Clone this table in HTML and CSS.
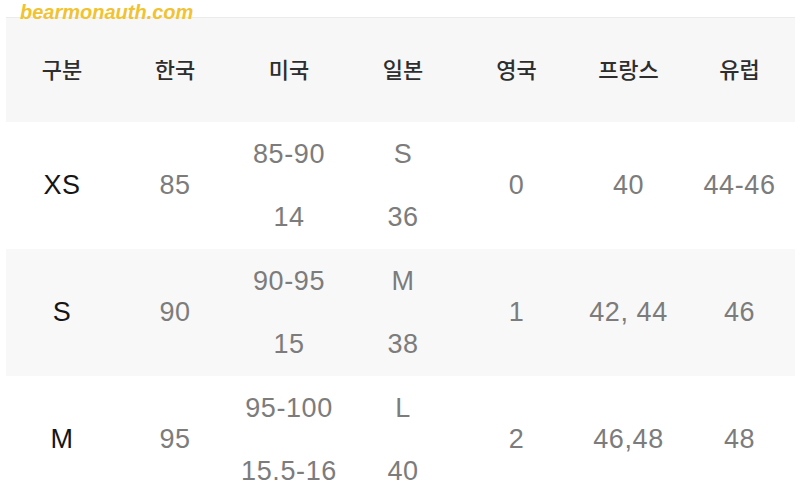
FILE: index.html
```html
<!DOCTYPE html>
<html lang="ko">
<head>
<meta charset="utf-8">
<link rel="stylesheet" href="styles.css">
</head>
<body>
<div class="watermark">bearmonauth.com</div>
<div class="table">
  <div class="row head">
    <div class="cell">구분</div>
    <div class="cell">한국</div>
    <div class="cell">미국</div>
    <div class="cell">일본</div>
    <div class="cell">영국</div>
    <div class="cell">프랑스</div>
    <div class="cell">유럽</div>
  </div>
  <div class="row body">
    <div class="cell size">XS</div>
    <div class="cell">85</div>
    <div class="cell multi"><span>85-90</span><span>14</span></div>
    <div class="cell multi"><span>S</span><span>36</span></div>
    <div class="cell">0</div>
    <div class="cell">40</div>
    <div class="cell">44-46</div>
  </div>
  <div class="row body alt">
    <div class="cell size">S</div>
    <div class="cell">90</div>
    <div class="cell multi"><span>90-95</span><span>15</span></div>
    <div class="cell multi"><span>M</span><span>38</span></div>
    <div class="cell">1</div>
    <div class="cell">42, 44</div>
    <div class="cell">46</div>
  </div>
  <div class="row body">
    <div class="cell size">M</div>
    <div class="cell">95</div>
    <div class="cell multi"><span>95-100</span><span>15.5-16</span></div>
    <div class="cell multi"><span>L</span><span>40</span></div>
    <div class="cell">2</div>
    <div class="cell">46,48</div>
    <div class="cell">48</div>
  </div>
</div>
</body>
</html>
```
FILE: styles.css
```css
html, body {
  margin: 0;
  padding: 0;
  background: #ffffff;
  width: 800px;
  height: 490px;
  overflow: hidden;
}
body {
  position: relative;
  font-family: "Liberation Sans", "Noto Sans CJK KR", sans-serif;
}
.watermark {
  position: absolute;
  left: 20px;
  top: 1px;
  font-family: "Liberation Sans", sans-serif;
  font-weight: bold;
  font-style: italic;
  font-size: 20px;
  color: #f1c232;
  z-index: 2;
}
.table {
  margin: 17px 0 0 6px;
  width: 789px;
}
.row {
  display: grid;
  grid-template-columns: 112px 114px 114px 114px 113px 111px 111px;
}
.head {
  height: 104px;
  background: #f7f7f7;
  border-top: 1px solid #ebebeb;
}
.head .cell {
  font-family: "Noto Sans CJK KR", sans-serif;
  font-size: 22px;
  font-weight: 500;
  color: #2e2e2e;
  letter-spacing: 0;
  padding-bottom: 4px;
}
.body {
  height: 127px;
}
.alt {
  background: #f8f8f8;
}
.cell {
  display: flex;
  flex-direction: column;
  align-items: center;
  justify-content: center;
  font-size: 27px;
  color: #7c7c7c;
  letter-spacing: 0.6px;
  white-space: nowrap;
}
.cell.size {
  color: #151515;
}
.multi span {
  line-height: 63px;
}
```
